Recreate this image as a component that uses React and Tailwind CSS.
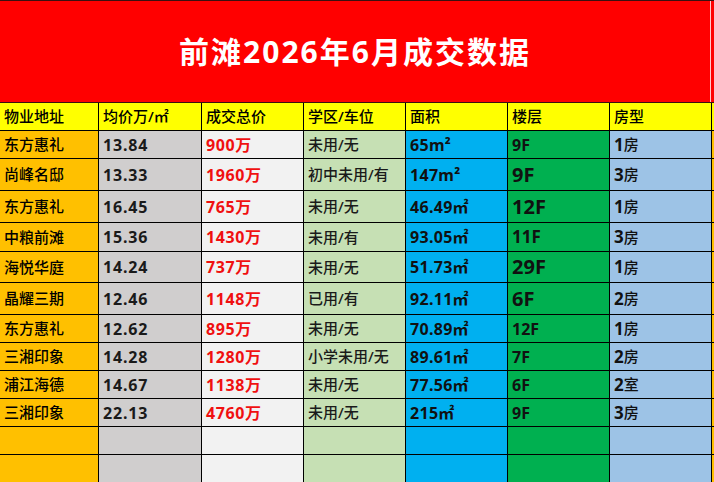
const FONT = { fontFamily: '"Noto Sans", "Noto Sans CJK SC", sans-serif' };

const ROWS = [
  { h: 'h-[28px]', name: '东方惠礼', price: '13.84', total: '900万', school: '未用/无', area: '65m²', floor: '9F', room: ['1', '房'] },
  { h: 'h-[32px]', name: '尚峰名邸', price: '13.33', total: '1960万', school: '初中未用/有', area: '147m²', floor: '9F', big: true, room: ['3', '房'] },
  { h: 'h-[32px]', name: '东方惠礼', price: '16.45', total: '765万', school: '未用/无', area: '46.49㎡', floor: '12F', big: true, room: ['1', '房'] },
  { h: 'h-[29px]', name: '中粮前滩', price: '15.36', total: '1430万', school: '未用/有', area: '93.05㎡', floor: '11F', mid: true, room: ['3', '房'] },
  { h: 'h-[31px]', name: '海悦华庭', price: '14.24', total: '737万', school: '未用/无', area: '51.73㎡', floor: '29F', big: true, room: ['1', '房'] },
  { h: 'h-[32px]', name: '晶耀三期', price: '12.46', total: '1148万', school: '已用/有', area: '92.11㎡', floor: '6F', big: true, room: ['2', '房'] },
  { h: 'h-[28px]', name: '东方惠礼', price: '12.62', total: '895万', school: '未用/无', area: '70.89㎡', floor: '12F', room: ['1', '房'] },
  { h: 'h-[28px]', name: '三湘印象', price: '14.28', total: '1280万', school: '小学未用/无', area: '89.61㎡', floor: '7F', room: ['2', '房'] },
  { h: 'h-[28px]', name: '浦江海德', price: '14.67', total: '1138万', school: '未用/无', area: '77.56㎡', floor: '6F', room: ['2', '室'] },
  { h: 'h-[28px]', name: '三湘印象', price: '22.13', total: '4760万', school: '未用/无', area: '215㎡', floor: '9F', room: ['3', '房'] },
];

const GRID = 'grid grid-cols-[99px_103px_102px_102px_102px_102px_102px_1fr] border-b border-black';
const CELL = 'flex items-center pl-[4px] border-r border-black overflow-hidden whitespace-nowrap';

function Row({ r }) {
  const floorSize = r.big ? 'text-[20px]' : r.mid ? 'text-[17px]' : 'text-[16px]';
  return (
    <div className={`${GRID} ${r.h}`}>
      <div className={`${CELL} pl-[3px] bg-[#ffc000] text-[15px] font-medium text-black`}>{r.name}</div>
      <div className={`${CELL} bg-[#d0cece] text-[16px] font-bold tracking-[0.8px] text-[#1a1a1a]`}>{r.price}</div>
      <div className={`${CELL} bg-[#f2f2f2] text-[16px] font-bold tracking-[0.6px] text-[#f01010]`}>{r.total}</div>
      <div className={`${CELL} bg-[#c6e0b4] text-[15px] font-medium text-[#1a1a1a]`}>{r.school}</div>
      <div className={`${CELL} bg-[#00b0f0] text-[16px] font-bold tracking-[0.3px] text-[#111]`}>{r.area}</div>
      <div className={`${CELL} bg-[#00b050] ${floorSize} font-bold text-[#111]`}>{r.floor}</div>
      <div className={`${CELL} bg-[#9dc3e6] text-[15px] font-medium text-[#111]`}>
        <span className="font-bold text-[17px]">{r.room[0]}</span>
        <span>{r.room[1]}</span>
      </div>
      <div className="bg-[#ffc000]" />
    </div>
  );
}

function EmptyRow({ h }) {
  return (
    <div className={`${GRID} ${h}`}>
      <div className={`${CELL} bg-[#ffc000]`} />
      <div className={`${CELL} bg-[#d0cece]`} />
      <div className={`${CELL} bg-[#f2f2f2]`} />
      <div className={`${CELL} bg-[#c6e0b4]`} />
      <div className={`${CELL} bg-[#00b0f0]`} />
      <div className={`${CELL} bg-[#00b050]`} />
      <div className={`${CELL} bg-[#9dc3e6]`} />
      <div className="bg-[#ffc000]" />
    </div>
  );
}

export default function App() {
  const headers = ['物业地址', '均价万/㎡', '成交总价', '学区/车位', '面积', '楼层', '房型'];
  return (
    <div className="w-[714px] h-[482px] overflow-hidden bg-white" style={FONT}>
      <div className="flex h-[103px] bg-[#ff0000] border-t border-b border-[#3a1010]">
        <div className="w-[711px] flex items-center justify-center border-r border-[#ffc8c8] pb-[1px]">
          <h1 className="text-white text-[30px] font-bold tracking-[2px]">前滩2026年6月成交数据</h1>
        </div>
        <div className="flex-1" />
      </div>

      <div className={`${GRID} h-[28px] bg-[#ffff00]`}>
        {headers.map((t, i) => (
          <div key={t} className={`${CELL} ${i === 0 ? 'pl-[3px]' : ''} text-[15px] font-medium text-black`}>{t}</div>
        ))}
        <div />
      </div>

      {ROWS.map((r, i) => <Row key={i} r={r} />)}
      <EmptyRow h="h-[28px]" />
      <EmptyRow h="h-[28px]" />
    </div>
  );
}
